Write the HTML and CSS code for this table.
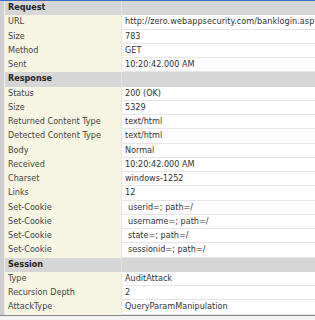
FILE: index.html
```html
<!DOCTYPE html>
<html lang="en">
<head>
    <meta charset="UTF-8">
    <title>Request Properties</title>
    <link rel="stylesheet" href="styles.css">
</head>
<body>
    <div class="frame">
        <div class="gutter"></div>
        <div class="grid">
            <div class="row cat"><div class="name">Request</div><div class="value"></div></div>
            <div class="row"><div class="name">URL</div><div class="value url">http://zero.webappsecurity.com/banklogin.asp</div></div>
            <div class="row"><div class="name">Size</div><div class="value">783</div></div>
            <div class="row"><div class="name">Method</div><div class="value">GET</div></div>
            <div class="row"><div class="name">Sent</div><div class="value">10:20:42.000 AM</div></div>

            <div class="row cat"><div class="name">Response</div><div class="value"></div></div>
            <div class="row"><div class="name">Status</div><div class="value">200 (OK)</div></div>
            <div class="row"><div class="name">Size</div><div class="value">5329</div></div>
            <div class="row"><div class="name">Returned Content Type</div><div class="value">text/html</div></div>
            <div class="row"><div class="name">Detected Content Type</div><div class="value">text/html</div></div>
            <div class="row"><div class="name">Body</div><div class="value">Normal</div></div>
            <div class="row"><div class="name">Received</div><div class="value">10:20:42.000 AM</div></div>
            <div class="row"><div class="name">Charset</div><div class="value">windows-1252</div></div>
            <div class="row"><div class="name">Links</div><div class="value">12</div></div>
            <div class="row"><div class="name">Set-Cookie</div><div class="value sub">userid=; path=/</div></div>
            <div class="row"><div class="name">Set-Cookie</div><div class="value sub">username=; path=/</div></div>
            <div class="row"><div class="name">Set-Cookie</div><div class="value sub">state=; path=/</div></div>
            <div class="row"><div class="name">Set-Cookie</div><div class="value sub">sessionid=; path=/</div></div>

            <div class="row cat"><div class="name">Session</div><div class="value"></div></div>
            <div class="row"><div class="name">Type</div><div class="value">AuditAttack</div></div>
            <div class="row"><div class="name">Recursion Depth</div><div class="value">2</div></div>
            <div class="row"><div class="name">AttackType</div><div class="value">QueryParamManipulation</div></div>
        </div>
    </div>
</body>
</html>
```

FILE: styles.css
```css
* {
    margin: 0;
    padding: 0;
    box-sizing: border-box;
}

body {
    font-family: "DejaVu Sans Condensed", "DejaVu Sans", sans-serif;
    font-size: 9px;
    color: #222;
    background: #f4f4f4;
    overflow: hidden;
}

.frame {
    display: flex;
    border-top: 1px solid #3a6cc4;
    border-bottom: 1px solid #8a8a8a;
}

.gutter {
    width: 5px;
    background: #cfcfcf;
    border-right: 1px solid #ececec;
}

.grid {
    flex: 1;
    display: flex;
    flex-direction: column;
}

.row {
    display: grid;
    grid-template-columns: 116px 1fr;
    height: 14.25px;
    line-height: 13px;
}

.name {
    background: #f6f6e2;
    padding-left: 3px;
    white-space: nowrap;
    color: #444;
}

.value {
    background: #fff;
    border-left: 1px solid #e6e6e6;
    border-bottom: 1px solid #e6e6e6;
    padding-left: 3px;
    white-space: nowrap;
    overflow: hidden;
    color: #333;
}

.value.url {
    letter-spacing: 0.06px;
}

.value.sub {
    padding-left: 6px;
}

.row.cat .name,
.row.cat .value {
    background: #d6d6d6;
    font-weight: bold;
    color: #222;
    border-bottom: none;
}

.row.cat .value {
    border-left: 1px solid #e2e2e2;
}
```
